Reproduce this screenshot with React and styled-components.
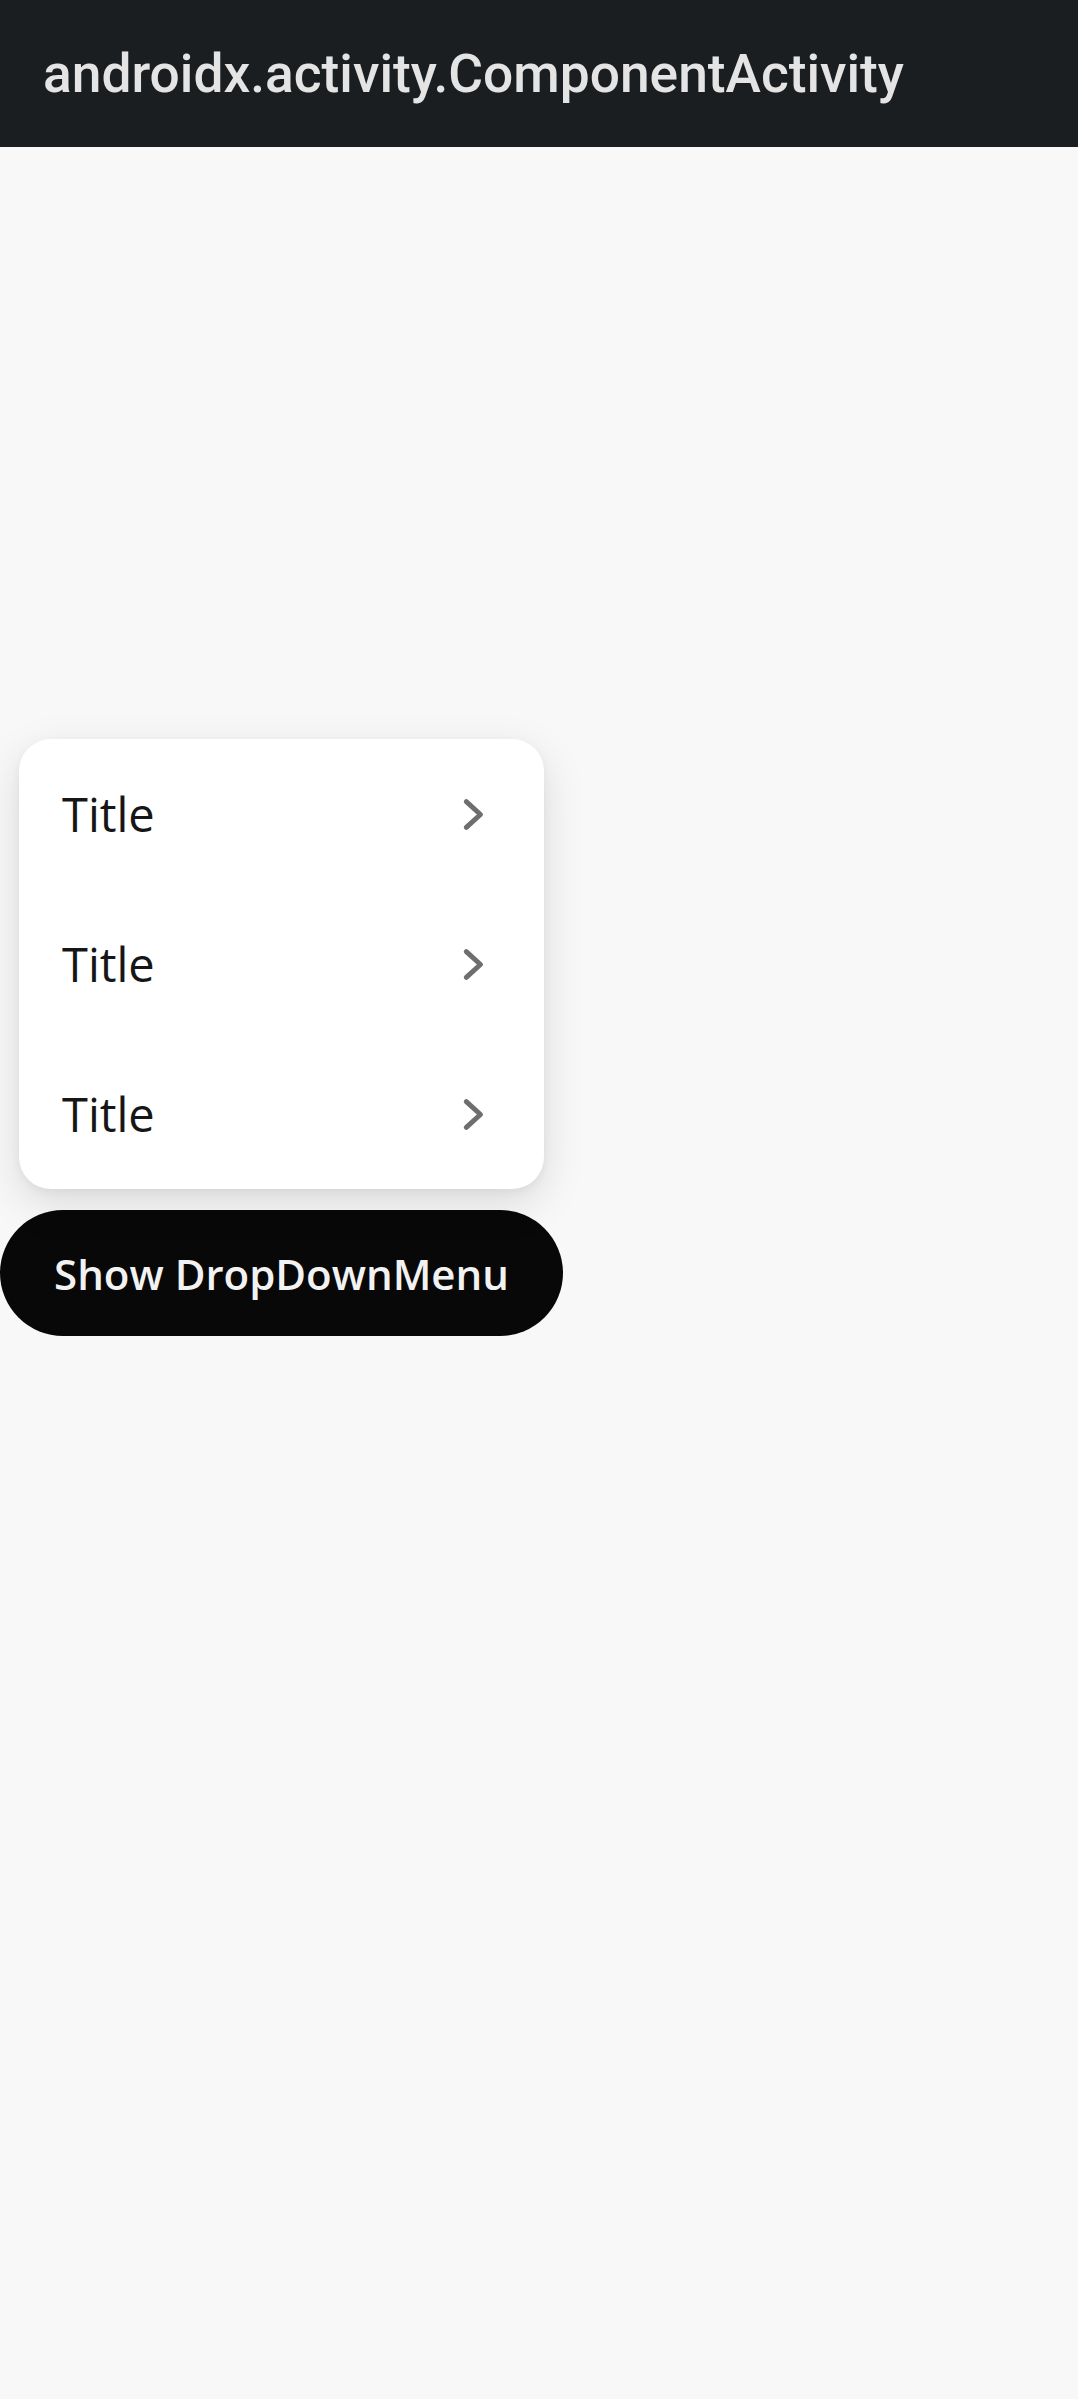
import React from "react";
import styled, { createGlobalStyle } from "styled-components";

const Global = createGlobalStyle`
  html, body { margin: 0; padding: 0; background: #f8f8f8; }
  * { box-sizing: border-box; }
`;

const Screen = styled.div`
  display: flex;
  flex-direction: column;
  min-height: 100vh;
  background: #f8f8f8;
`;

const TopBar = styled.header`
  height: 147px;
  flex: 0 0 147px;
  background: #1b1e21;
  display: flex;
  align-items: center;
  padding: 0 43px;
`;

const BarTitle = styled.h1`
  margin: 0;
  font-family: Roboto, "Noto Sans", sans-serif;
  font-weight: 500;
  font-size: 53.3px;
  color: #e4e4e4;
  letter-spacing: 0;
`;

const Content = styled.main`
  flex: 1;
  display: flex;
  align-items: center;
  justify-content: flex-start;
`;

const Anchor = styled.div`
  position: relative;
`;

const Menu = styled.div`
  position: absolute;
  left: 19px;
  bottom: calc(100% + 21px);
  width: 525px;
  background: #ffffff;
  border-radius: 32px;
  box-shadow: 0 14px 44px rgba(0, 0, 0, 0.12), 0 3px 10px rgba(0, 0, 0, 0.05);
  display: flex;
  flex-direction: column;
  overflow: hidden;
`;

const Item = styled.div`
  height: 150px;
  display: flex;
  align-items: center;
  justify-content: space-between;
  padding: 0 42px 0 43px;
`;

const ItemTitle = styled.span`
  font-family: "Open Sans", "Noto Sans", sans-serif;
  font-size: 47px;
  color: #161616;
`;

const Chevron = styled.svg`
  width: 63px;
  height: 63px;
  display: block;
`;

const Button = styled.button`
  width: 563px;
  height: 126px;
  border: none;
  border-radius: 63px;
  background: #080808;
  color: #f2f2f2;
  font-family: "Open Sans", "Noto Sans", sans-serif;
  font-weight: 600;
  font-size: 42px;
  display: flex;
  align-items: center;
  justify-content: center;
  padding: 0;
  cursor: pointer;
`;

const ChevronIcon = () => (
  <Chevron viewBox="0 0 24 24" fill="none">
    <path
      d="M10.4 7.1 L15.8 12 L10.4 16.9"
      stroke="#6e6e6e"
      strokeWidth="1.9"
      strokeLinecap="round"
      strokeLinejoin="round"
    />
  </Chevron>
);

export default function App() {
  const items = ["Title", "Title", "Title"];
  return (
    <Screen>
      <Global />
      <TopBar>
        <BarTitle>androidx.activity.ComponentActivity</BarTitle>
      </TopBar>
      <Content>
        <Anchor>
          <Menu>
            {items.map((t, i) => (
              <Item key={i}>
                <ItemTitle>{t}</ItemTitle>
                <ChevronIcon />
              </Item>
            ))}
          </Menu>
          <Button>Show DropDownMenu</Button>
        </Anchor>
      </Content>
    </Screen>
  );
}
